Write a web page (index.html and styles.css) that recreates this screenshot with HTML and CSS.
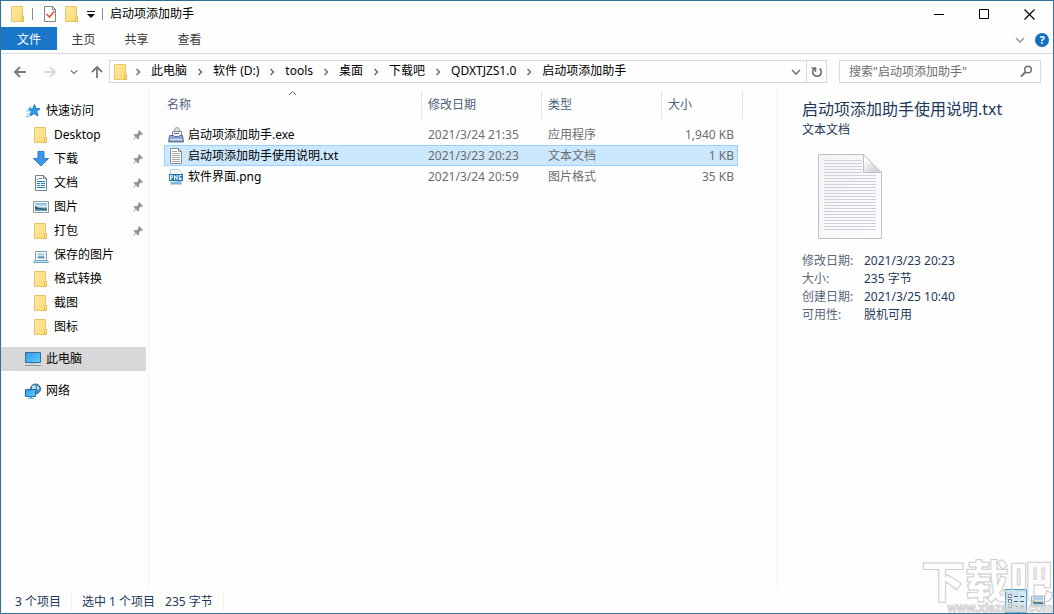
FILE: index.html
```html
<!DOCTYPE html>
<html lang="zh-CN">
<head>
<meta charset="utf-8">
<title>启动项添加助手</title>
<link rel="stylesheet" href="styles.css">
</head>
<body>
<svg class="sprite" aria-hidden="true">
  <defs>
    <linearGradient id="g-folder" x2="1" y2="1"><stop offset="0" stop-color="#ffeaa2"/><stop offset="1" stop-color="#fbd975"/></linearGradient>
    <linearGradient id="g-screen" x2="1" y2="1"><stop offset="0" stop-color="#2c9bea"/><stop offset="1" stop-color="#62cbff"/></linearGradient>
    <linearGradient id="g-paper" x2="1" y2="1"><stop offset="0" stop-color="#f4f4f6"/><stop offset="1" stop-color="#fdfdff"/></linearGradient>
    <linearGradient id="g-fold" x2="1" y2="1"><stop offset="0.2" stop-color="#fff"/><stop offset="0.7" stop-color="#d5d5d8"/></linearGradient>
    <linearGradient id="g-photo" y2="1" x2="0"><stop offset="0" stop-color="#7db7e6"/><stop offset="0.45" stop-color="#d5e8f2"/><stop offset="0.7" stop-color="#5c8fa5"/><stop offset="1" stop-color="#5fa3cb"/></linearGradient>
    <pattern id="p-lines" width="52" height="3" patternUnits="userSpaceOnUse"><path d="M0 .5h52" stroke="#cfd0d9"/></pattern>
  </defs>
  <symbol id="folder" viewBox="0 0 16 16"><path d="M1.500.5h11v10h1v5h-12z" fill="url(#g-folder)" stroke="#e5c768"/><path d="M11.500 15.500v-4l1-1h1v5z" fill="#ffe596" stroke="#dfba50"/></symbol>
  <symbol id="check" viewBox="0 0 16 16"><path d="M2.500.5h8l3 3v12h-11z" fill="#fff" stroke="#858585"/><path d="M10.500.5v3h3" fill="none" stroke="#858585"/><path d="M4.500 8l3 3 5-6" fill="none" stroke="#e25a38" stroke-width="1.600"/></symbol>
  <symbol id="chev" viewBox="0 0 8 8"><path d="M2.500 1l3 3-3 3" fill="none" stroke="currentColor" stroke-width="1.500"/></symbol>
  <symbol id="down" viewBox="0 0 10 10"><path d="M1 3l4 4 4-4" fill="none" stroke="currentColor" stroke-width="1.600"/></symbol>
  <symbol id="arrow" viewBox="0 0 14 14"><path d="M13 7H2M7 2L2 7l5 5" fill="none" stroke="currentColor" stroke-width="1.800"/></symbol>
  <symbol id="arrow-up" viewBox="0 0 14 14"><path d="M7 13V2M2 7l5-5 5 5" fill="none" stroke="currentColor" stroke-width="1.800"/></symbol>
  <symbol id="star" viewBox="0 0 16 16"><path d="M9.500 1.500l1.400 4 4.100.1-3.300 2.800 1.300 4.600-4-2.500-4 2.500 1.400-4.500L3.500 6l4.300-.2z" fill="#2f9ce6" stroke="#1d7dc8"/><path d="M1 8h4M2 11h3M1 13.500h3M4 4h2" stroke="#64bdf2"/></symbol>
  <symbol id="dl" viewBox="0 0 16 16"><path d="M5 .5h6v7h4.500L8 15 .5 7.500H5z" fill="#3f96e6" stroke="#2d7dc9"/></symbol>
  <symbol id="doc" viewBox="0 0 16 16"><path d="M2.500.5h8l3 3v12h-11z" fill="#fff" stroke="#76828a"/><path d="M10.500.5v3h3" fill="none" stroke="#76828a"/><path d="M4 4.500h1M6 3.500h3M4 6.500h8M4 8.500h3M8 8.500h4M4 10.500h3M8 10.500h4M4 12.500h8" stroke="#2488ba"/></symbol>
  <symbol id="pic" viewBox="0 0 16 16"><path d="M.5 2.500h15v11H.5z" fill="#fff" stroke="#8c9aa4"/><path d="M2 4h12v8H2z" fill="url(#g-photo)"/><path d="M2 7l4 2 8 1v1L2 10z" fill="#335b58"/></symbol>
  <symbol id="saved" viewBox="0 0 16 16"><path d="M2.500 4.500h11v9h-11z" fill="#fff" stroke="#8799a8"/><path d="M4.500 6.500h7v5h-7z" fill="url(#g-photo)"/><path d="M1.500 13.500h13l1 2H.5z" fill="#bde4f6" stroke="#71a8c2"/></symbol>
  <symbol id="pc" viewBox="0 0 16 16"><path d="M.5 1.500h15v10H.5z" fill="url(#g-screen)" stroke="#376d95"/><path d="M6 12h4v1H6z" fill="#a9c5d9"/><path d="M0 14.500h16" stroke="#8a98a2"/></symbol>
  <symbol id="net" viewBox="0 0 16 16"><circle cx="10.500" cy="6" r="5" fill="#4b91bd" stroke="#2b678e"/><path d="M7 3l3-1 1 3-2 2-2-1zM12 3l2 1v3l-2-1z" fill="#bde0ec"/><path d="M.5 6.500h10v7H.5z" fill="url(#g-screen)" stroke="#246fa8"/><path d="M5 14h2v1h2v1H3v-1h2z" fill="#63b4e7"/></symbol>
  <symbol id="pin" viewBox="0 0 10 10"><path d="M6 0l4 4-1 .8-1-.3-2 2 .2 1.800L5 9.500 3 7.500.4 10 0 9.600 2.500 7 .5 5l1.200-1 1.800.2 2-2-.3-1z" fill="#8b969e"/></symbol>
  <symbol id="exe" viewBox="0 0 16 16"><circle cx="9" cy="3" r="2.500" fill="#e4ddd5" stroke="#a6a6a6"/><path d="M4.500 4.500h9v5h-9z" fill="#f7f8fb" stroke="#7883a3"/><path d="M6 6.500h5" stroke="#5167a0"/><path d="M1.500 8.500h4l1 1h4l1-1h3l1 6.500H.6z" fill="#8fa6d3" stroke="#586b9c"/><path d="M2 12.500h12" stroke="#dfe7f6"/></symbol>
  <symbol id="txt" viewBox="0 0 16 16"><path d="M2.500.5h8l3 3v12h-11z" fill="#fff" stroke="#8b8b8b"/><path d="M10.500.5v3h3" fill="none" stroke="#8b8b8b"/><path d="M4 3.500h5M4 5.500h8M4 7.500h8M4 9.500h8M4 11.500h8M4 13.500h8" stroke="#a5a5a5"/></symbol>
  <symbol id="png" viewBox="0 0 16 16"><path d="M2.500.5h8l3 3v12h-11z" fill="#f7fafc" stroke="#c4d0d9"/><path d="M3 13l10-1v3H3z" fill="#81b8dc"/><path d="M1 5h14v7H1z" fill="#2677b5"/><path d="M2.500 11V6.500h1.700V9H2.500M6.500 11V6.500l2.500 4V6M13.500 6.500h-2.300v4h2V9H12" fill="none" stroke="#fff"/></symbol>
  <symbol id="list" viewBox="0 0 16 14"><path d="M.5.500h3v3h-3zM.5 5.500h3v3h-3zM.5 10.500h3v3h-3z" fill="#fff" stroke="#607d8b"/><path d="M6 2.500h4M12 2.500h4M6 7.500h4M12 7.500h4M6 12.500h4M12 12.500h4" stroke="#52626b"/></symbol>
</svg>

<div class="window">
  <header class="titlebar">
    <svg class="icon"><use href="#folder"/></svg>
    <span class="bar"></span>
    <button class="quick" aria-label="属性"><svg class="icon"><use href="#check"/></svg></button>
    <button class="quick" aria-label="新建文件夹"><svg class="icon"><use href="#folder"/></svg></button>
    <button class="customize" aria-label="自定义快速访问工具栏"><svg width="8" height="8"><path d="M0 1.500h8" stroke="#111"/><path d="M0 4h8L4 8z" fill="#111"/></svg></button>
    <span class="bar"></span>
    <h1 class="title">启动项添加助手</h1>
    <div class="controls">
      <button aria-label="最小化"><svg width="11" height="11"><path d="M0 5.500h10" stroke="#000"/></svg></button>
      <button aria-label="最大化"><svg width="11" height="11"><path d="M.5.500h9v9h-9z" fill="none" stroke="#000"/></svg></button>
      <button aria-label="关闭"><svg width="11" height="11"><path d="M.5.500l10 10M10.500.5l-10 10" stroke="#000" stroke-width="1.200"/></svg></button>
    </div>
  </header>

  <nav class="tabs" aria-label="功能区">
    <button class="tab tab-file">文件</button>
    <button class="tab">主页</button>
    <button class="tab">共享</button>
    <button class="tab">查看</button>
    <div class="tabs-end">
      <button class="expand" aria-label="展开功能区"><svg width="10" height="10"><use href="#down"/></svg></button>
      <button class="help" aria-label="帮助">?</button>
    </div>
  </nav>

  <div class="navbar">
    <div class="history">
      <button aria-label="后退"><svg width="14" height="14"><use href="#arrow"/></svg></button>
      <button class="off" aria-label="前进"><svg class="flip" width="14" height="14"><use href="#arrow"/></svg></button>
      <button class="recent" aria-label="最近位置"><svg width="8" height="8"><use href="#down"/></svg></button>
      <button aria-label="上移"><svg width="14" height="14"><use href="#arrow-up"/></svg></button>
    </div>
    <div class="address">
      <svg class="icon"><use href="#folder"/></svg>
      <ol class="crumbs">
        <li><svg><use href="#chev"/></svg><a href="#">此电脑</a></li>
        <li><svg><use href="#chev"/></svg><a href="#">软件 (D:)</a></li>
        <li><svg><use href="#chev"/></svg><a href="#">tools</a></li>
        <li><svg><use href="#chev"/></svg><a href="#">桌面</a></li>
        <li><svg><use href="#chev"/></svg><a href="#">下载吧</a></li>
        <li><svg><use href="#chev"/></svg><a href="#">QDXTJZS1.0</a></li>
        <li><svg><use href="#chev"/></svg><a href="#">启动项添加助手</a></li>
      </ol>
      <button class="addr-btn" aria-label="以前的位置"><svg width="10" height="10"><use href="#down"/></svg></button>
      <button class="addr-btn refresh" aria-label="刷新"><svg width="12" height="12"><path d="M8.500 2.500a4.300 4.300 0 1 1-5 0M4.500 6V2H.5" fill="none" stroke="#707070" stroke-width="1.600"/></svg></button>
    </div>
    <label class="search">
      <input type="text" aria-label="搜索" placeholder='搜索"启动项添加助手"'>
      <svg width="13" height="13"><circle cx="8" cy="4.500" r="3.300" fill="none" stroke="#707070" stroke-width="1.500"/><path d="M5.500 7L1 11.500" stroke="#707070" stroke-width="2"/></svg>
    </label>
  </div>

  <main class="body">
    <nav class="sidebar" aria-label="导航窗格">
      <a class="item root" href="#"><svg class="icon"><use href="#star"/></svg>快速访问</a>
      <a class="item" href="#"><svg class="icon"><use href="#folder"/></svg>Desktop<svg class="pin"><use href="#pin"/></svg></a>
      <a class="item" href="#"><svg class="icon"><use href="#dl"/></svg>下载<svg class="pin"><use href="#pin"/></svg></a>
      <a class="item" href="#"><svg class="icon"><use href="#doc"/></svg>文档<svg class="pin"><use href="#pin"/></svg></a>
      <a class="item" href="#"><svg class="icon"><use href="#pic"/></svg>图片<svg class="pin"><use href="#pin"/></svg></a>
      <a class="item" href="#"><svg class="icon"><use href="#folder"/></svg>打包<svg class="pin"><use href="#pin"/></svg></a>
      <a class="item" href="#"><svg class="icon"><use href="#saved"/></svg>保存的图片</a>
      <a class="item" href="#"><svg class="icon"><use href="#folder"/></svg>格式转换</a>
      <a class="item" href="#"><svg class="icon"><use href="#folder"/></svg>截图</a>
      <a class="item" href="#"><svg class="icon"><use href="#folder"/></svg>图标</a>
      <a class="item root spaced current" href="#"><svg class="icon"><use href="#pc"/></svg>此电脑</a>
      <a class="item root spaced" href="#"><svg class="icon"><use href="#net"/></svg>网络</a>
    </nav>

    <section class="files">
      <table class="list">
        <colgroup><col><col class="c-date"><col class="c-type"><col class="c-size"></colgroup>
        <thead>
          <tr><th class="sorted"><svg class="sort" width="9" height="6"><path d="M1 5l3.500-3.500L8 5" fill="none" stroke="#666"/></svg>名称</th><th>修改日期</th><th>类型</th><th>大小</th></tr>
        </thead>
        <tbody>
          <tr><td class="name"><span><svg class="icon"><use href="#exe"/></svg>启动项添加助手.exe</span></td><td>2021/3/24 21:35</td><td>应用程序</td><td class="size">1,940 KB</td></tr>
          <tr class="selected"><td class="name"><span><svg class="icon"><use href="#txt"/></svg>启动项添加助手使用说明.txt</span></td><td>2021/3/23 20:23</td><td>文本文档</td><td class="size">1 KB</td></tr>
          <tr><td class="name"><span><svg class="icon"><use href="#png"/></svg>软件界面.png</span></td><td>2021/3/24 20:59</td><td>图片格式</td><td class="size">35 KB</td></tr>
        </tbody>
      </table>
    </section>

    <aside class="details">
      <h2 class="d-name">启动项添加助手使用说明.txt</h2>
      <p class="d-type">文本文档</p>
      <svg class="d-thumb" width="64" height="85"><path d="M.5.500h45l18 18v66H.5z" fill="url(#g-paper)" stroke="#bfc0c6"/><path d="M6 6h38v14h14v57H6z" fill="url(#p-lines)"/><path d="M45.500.5v18h18z" fill="url(#g-fold)" stroke="#bfc0c6"/></svg>
      <dl class="props">
        <dt>修改日期:</dt><dd>2021/3/23 20:23</dd>
        <dt>大小:</dt><dd>235 字节</dd>
        <dt>创建日期:</dt><dd>2021/3/25 10:40</dd>
        <dt>可用性:</dt><dd>脱机可用</dd>
      </dl>
    </aside>
  </main>

  <footer class="status">
    <span class="count">3 个项目</span>
    <span>选中 1 个项目</span>
    <span class="bytes">235 字节</span>
    <div class="views">
      <button class="view active" aria-label="详细信息"><svg width="16" height="14"><use href="#list"/></svg></button>
      <button class="view" aria-label="大缩略图"><svg width="14" height="14"><use href="#pic"/></svg></button>
    </div>
  </footer>

  <div class="watermark"><span class="wm-name">下载吧</span><span class="wm-url">www.xiazaiba.com</span></div>
</div>
</body>
</html>
```
FILE: styles.css
```css
* { box-sizing: border-box; }

body {
  margin: 0;
  font: 12px/18px "Noto Sans", "Noto Sans CJK SC", sans-serif;
  color: #000;
  background: #fff;
}

button {
  display: flex;
  align-items: center;
  justify-content: center;
  padding: 0;
  border: 0;
  background: none;
  font: inherit;
  color: inherit;
}

a { color: inherit; text-decoration: none; }
h1, h2, p, dl, dd, ol { margin: 0; padding: 0; font-weight: 400; }

.sprite { position: absolute; width: 0; height: 0; }
.icon { width: 16px; height: 16px; flex: none; }

.window {
  position: relative;
  display: flex;
  flex-direction: column;
  height: 100vh;
  border: 1px solid #2f7198;
  background: #fefefe;
}

/* Title bar */
.titlebar { display: flex; align-items: center; height: 26px; padding-left: 9px; }
.bar { width: 1px; height: 12px; margin: 0 6px; background: #8c8c8c; }
.quick { width: 22px; }
.customize { width: 16px; }
.titlebar .customize + .bar { margin: 0 7px 0 3px; }
.title { font-size: 12px; }
.controls { display: flex; margin-left: auto; }
.controls button { width: 45px; height: 26px; padding-right: 2px; }

/* Ribbon tabs */
.tabs { display: flex; height: 27px; padding-bottom: 4px; border-bottom: 1px solid #dcdddd; }
.tab { width: 53px; height: 23px; padding-top: 2px; color: #3b3b3b; }
.tab-file { width: 56px; color: #fff; background: #1976c9; }
.tabs-end { display: flex; align-items: center; gap: 10px; margin: 4px 4px 0 auto; }
.expand { color: #a0a0a0; }
.help { width: 14px; height: 14px; border-radius: 50%; background: #116fc0; color: #fff; font-weight: 700; font-size: 11px; }

/* Address row */
.navbar { display: flex; height: 34px; padding: 6px 12px 5px 12px; }
.history { display: flex; align-items: center; gap: 16px; width: 96px; color: #777; }
.history .off { color: #d8d8d8; }
.history .recent { margin: 0 -4px 0 -3px; }
.flip { transform: scaleX(-1); }
.address { display: flex; flex: 1; align-items: center; padding-left: 3px; border: 1px solid #d9d9d9; }
.crumbs { display: flex; flex: 1; list-style: none; }
.crumbs li { display: flex; align-items: center; }
.crumbs a { line-height: 20px; padding-bottom: 2px; }
.crumbs svg { width: 8px; height: 8px; margin: 0 9px; color: #707070; }
.crumbs li:first-child svg { margin-left: 5px; }
.addr-btn { width: 20px; height: 21px; color: #777; }
.refresh { border-left: 1px solid #d9d9d9; }
.search { display: flex; align-items: center; width: 202px; margin-left: 12px; padding: 0 7px 0 9px; border: 1px solid #d9d9d9; }
.search input { flex: 1; min-width: 0; padding: 0; border: 0; outline: 0; background: none; font: inherit; }
.search input::placeholder { color: #6d6d6d; opacity: 1; }

/* Panes */
.body { display: flex; flex: 1; min-height: 0; }
.sidebar { width: 148px; padding: 11px 2px 0 0; border-right: 1px solid #f3f3f3; }
.item { display: flex; align-items: center; gap: 5px; height: 24px; padding: 0 3px 0 32px; }
.root { padding-left: 24px; }
.spaced { margin-top: 8px; }
.current { background: #d9d8d9; }
.pin { width: 10px; height: 10px; margin-left: auto; }

.files { flex: 1; padding: 2px 39px 0 15px; }
.list { width: 100%; table-layout: fixed; border-collapse: separate; border-spacing: 0; }
.c-date, .c-type { width: 120px; }
.c-size { width: 76px; }
.list th {
  position: relative;
  height: 29px;
  padding: 0 6px;
  border-right: 1px solid #e4e5e7;
  text-align: left;
  font-weight: 400;
  color: #4c607a;
}
.list th.sorted { padding-left: 3px; }
.list th:last-child { border-right: 0; box-shadow: 4px 0 #fefefe, 5px 0 #e4e5e7; }
.sort { position: absolute; top: 0; left: 50%; margin-left: -5px; }
.list thead::after { content: ""; display: block; height: 5px; }
.list td { height: 21px; padding: 0 4px 0 6px; color: #6d6d6d; }
.list td.name { padding-left: 4px; color: #000; }
.name span { display: flex; align-items: center; gap: 4px; }
.list td.size { text-align: right; }
.selected td { background: #cce8ff; border: solid #99d1ff; border-width: 1px 0; }
.selected td:first-child { padding-left: 3px; border-left-width: 1px; }
.selected td:last-child { padding-right: 3px; border-right-width: 1px; }
.list .selected .name { padding-left: 3px; }
.list .selected .size { padding-right: 3px; }

.details { width: 276px; padding: 10px 12px 0 24px; border-left: 1px solid #f0f0f0; color: #1e395b; }
.d-name { font-size: 16px; line-height: 22px; white-space: nowrap; }
.d-type { line-height: 20px; }
.d-thumb { display: block; margin: 14px 0 13px 16px; }
.props { display: grid; grid-template-columns: 62px 1fr; line-height: 18px; }
.props dt { color: #5a6779; }

/* Status bar */
.status { display: flex; align-items: center; height: 24px; padding: 0 4px 0 14px; color: #1e395b; }
.status span { margin-right: 10px; padding-top: 2px; }
.status .count { margin-right: 10px; padding-right: 10px; border-right: 1px solid #f1f1f1; }
.status .bytes { padding-right: 10px; border-right: 1px solid #f1f1f1; }
.views { display: flex; margin-left: auto; }
.view { width: 22px; height: 24px; }
.active { background: #cfe8f6; border: 1px solid #4aa1ca; }

/* Watermark laid over the lower right corner */
.watermark {
  position: absolute;
  right: 0;
  bottom: 0;
  display: flex;
  flex-direction: column;
  align-items: flex-end;
  pointer-events: none;
  color: transparent;
}
.wm-name { font: 900 44px/48px "Noto Sans CJK SC", sans-serif; -webkit-text-stroke: 1px #cdcdcd; }
.wm-url { font: 700 12px/10px "Liberation Sans", sans-serif; -webkit-text-stroke: 1px #d2d2d2; }
```
